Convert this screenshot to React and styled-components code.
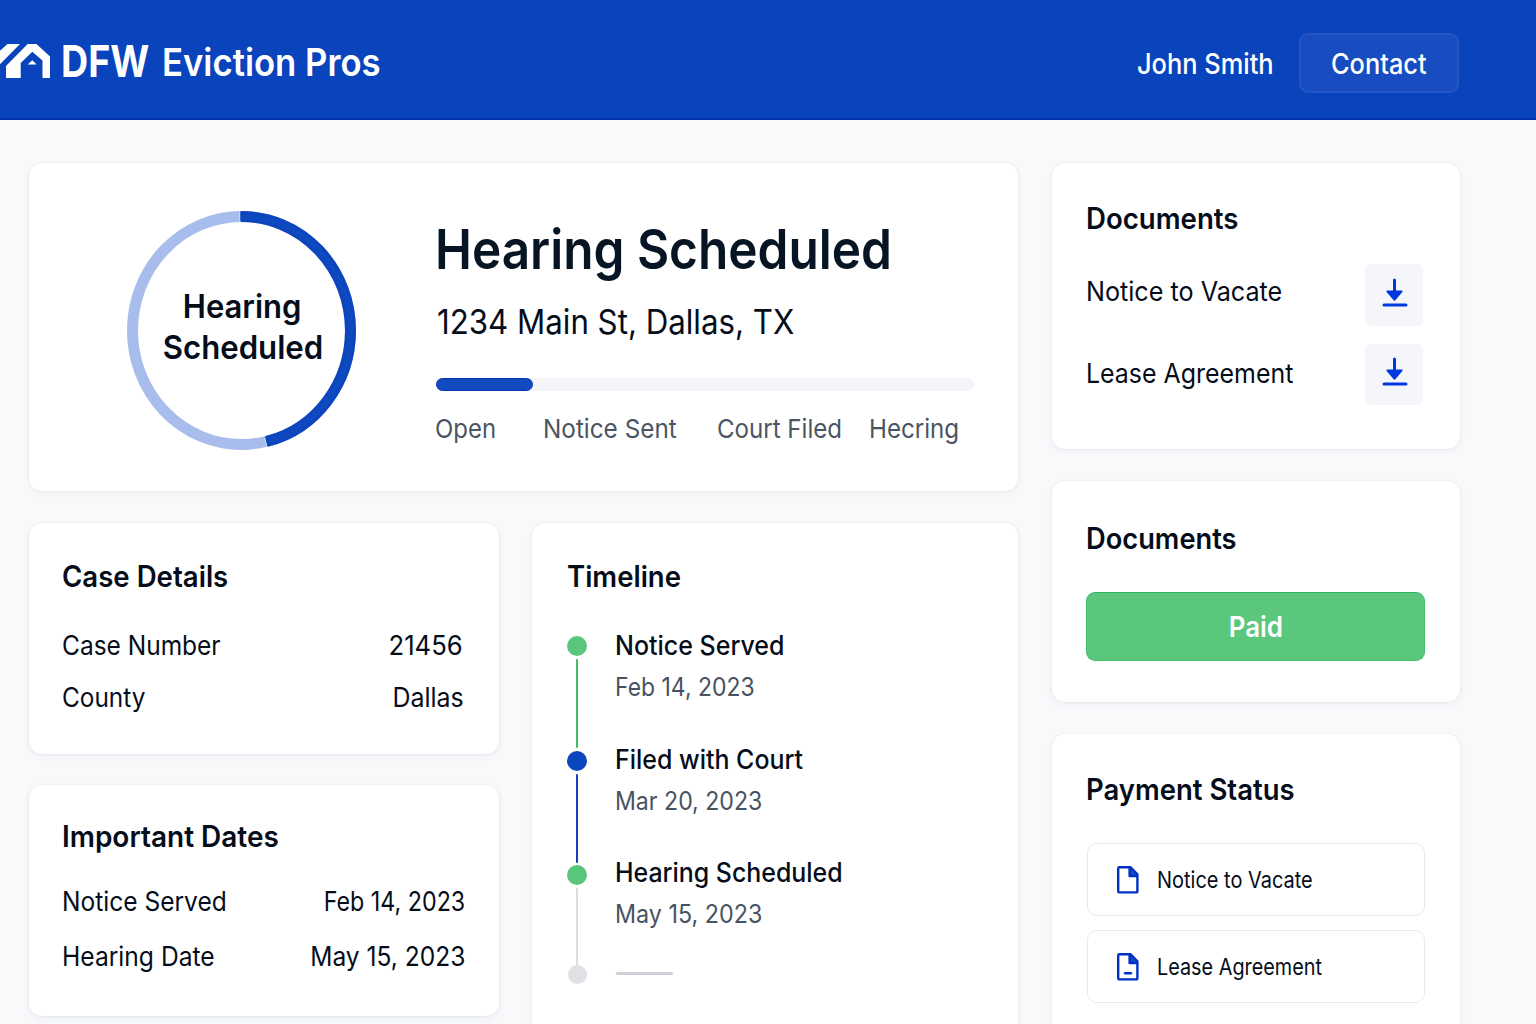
import React from "react";
import styled, { createGlobalStyle, css } from "styled-components";

const Global = createGlobalStyle`
  * { box-sizing: border-box; }
  html, body { margin: 0; height: 100%; overflow: hidden; }
  body {
    background: #f8f9fb;
    color: #060d1a;
    font-family: Inter, "Liberation Sans", sans-serif;
    -webkit-font-smoothing: antialiased;
  }
  h1, h2, p { margin: 0; font-weight: inherit; }
`;

/* Condensed setting of Inter: $fit is the horizontal scale of the glyphs. */
const condensed = css`
  display: block;
  width: max-content;
  white-space: pre;
  transform: scaleX(${(p) => p.$fit || 0.94});
  transform-origin: ${(p) => p.$from || "left"} center;
`;

const Page = styled.div`
  height: 1024px;
  overflow: hidden;
`;

const Header = styled.header`
  height: 120px;
  display: flex;
  justify-content: space-between;
  padding-right: 77px;
  color: #fff;
  background: #0a44bc;
  border-bottom: 2px solid #0032aa;
`;

const Brand = styled.div`
  display: flex;
  align-items: flex-start;
`;

const Logo = styled.svg`
  width: 52px;
  height: 36px;
  margin-top: 43px;
  fill: #fff;
`;

const BrandShort = styled.span`
  ${condensed}
  width: 99px;
  margin: 33.5px 0 0 8.7px;
  font-size: 44.5px;
  font-weight: 700;
  line-height: 55px;
`;

const BrandName = styled.span`
  ${condensed}
  margin: 37px 0 0 2.3px;
  font-size: 38px;
  font-weight: 600;
  line-height: 50px;
`;

const Account = styled.div`
  display: flex;
  align-items: flex-start;
  gap: 25px;
  padding-top: 33px;
`;

const UserName = styled.span`
  ${condensed}
  font-size: 28px;
  font-weight: 540;
  line-height: 62px;
`;

const ContactButton = styled.button`
  width: 160px;
  height: 60px;
  padding: 0;
  display: flex;
  justify-content: center;
  border: 2px solid #2456c5;
  border-radius: 9px;
  background: #174dc0;
  color: #fff;
  font: 540 28px/58px Inter, "Liberation Sans", sans-serif;
`;

const ButtonText = styled.span`
  ${condensed}
`;

const Board = styled.main`
  display: grid;
  grid-template-columns: 989px 408px;
  column-gap: 34px;
  padding: 43px 0 0 29px;
`;

const MainColumn = styled.div`
  display: flex;
  flex-direction: column;
  gap: 32px;
`;

const SideColumn = styled.div`
  display: flex;
  flex-direction: column;
  gap: 32px;
`;

const SplitRow = styled.div`
  display: grid;
  grid-template-columns: 470px 486px;
  column-gap: 33px;
  align-items: start;
`;

const CaseColumn = styled.div`
  display: flex;
  flex-direction: column;
  gap: 31px;
`;

const Card = styled.section`
  height: ${(p) => p.$height}px;
  padding: ${(p) => p.$pad || "33px 34px"};
  border-radius: 13px;
  background: #fff;
  box-shadow: 0 0 2px rgba(30, 45, 70, 0.09), 0 2px 6px rgba(30, 45, 70, 0.06);
`;

const CardTitle = styled.h2`
  ${condensed}
  font-size: 29.5px;
  font-weight: 570;
  line-height: 42px;
`;

const Hero = styled(Card)`
  display: flex;
  padding: 48px 42px 0 98px;
`;

const Ring = styled.div`
  display: grid;
  width: 229px;
  height: 239px;
  margin-right: 80px;
  > * { grid-area: 1 / 1; }
`;

const RingText = styled.div`
  display: flex;
  flex-direction: column;
  align-items: center;
  padding: 74.5px 0 0 2px;
`;

const RingLine = styled.span`
  ${condensed}
  font-size: 33px;
  font-weight: 560;
  line-height: 41px;
`;

const HeroBody = styled.div`
  flex: 1;
  padding-top: 5px;
`;

const HeroTitle = styled.h1`
  ${condensed}
  margin-left: -0.7px;
  font-size: 55px;
  font-weight: 590;
  line-height: 66px;
  color: #071424;
`;

const Address = styled.p`
  ${condensed}
  margin-top: 16px;
  margin-left: 0.6px;
  font-size: 34px;
  line-height: 48px;
`;

const Track = styled.div`
  width: 538px;
  height: 13px;
  margin: 32px 0 0;
  border-radius: 7px;
  background: #f4f5f9;
`;

const TrackFill = styled.div`
  width: 97px;
  height: 13px;
  border-radius: 7px;
  border: 1px solid #0536b8;
  background: #114abf;
`;

const Steps = styled.div`
  display: grid;
  grid-template-columns: 108px 174px 152px auto;
  margin: 18px 0 0 -1px;
`;

const Step = styled.span`
  ${condensed}
  font-size: 26px;
  line-height: 40px;
  color: #4a5563;
`;

const Rows = styled.div`
  display: flex;
  flex-direction: column;
  margin-top: ${(p) => p.$top}px;
`;

const Row = styled.div`
  display: flex;
  justify-content: space-between;
  height: ${(p) => p.$height}px;
  padding-right: ${(p) => p.$inset || 0}px;
  line-height: 40px;
  font-size: 26.5px;
`;

const RowText = styled.span`
  ${condensed}
  font-weight: ${(p) => p.$weight || 400};
`;

const TimelineBody = styled.div`
  display: flex;
  gap: 28px;
  margin-top: 39px;
`;

const Rail = styled.div`
  width: 20px;
  display: flex;
  flex-direction: column;
  align-items: center;
`;

const Dot = styled.i`
  width: ${(p) => p.$size || 20}px;
  height: ${(p) => p.$size || 20}px;
  flex: none;
  border-radius: 50%;
  background: ${(p) => p.$color};
`;

const Connector = styled.i`
  width: 2px;
  height: ${(p) => p.$height}px;
  margin: ${(p) => p.$gap};
  border-radius: 1px;
  background: ${(p) => p.$color};
`;

const Events = styled.div`
  display: flex;
  flex-direction: column;
`;

const EventItem = styled.div`
  height: 113.5px;
`;

const EventName = styled.p`
  ${condensed}
  margin-top: -11px;
  font-size: 26.5px;
  font-weight: 450;
  line-height: 40px;
`;

const EventDate = styled.p`
  ${condensed}
  margin-top: 2px;
  font-size: 25.5px;
  line-height: 40px;
  color: #485361;
`;

const Placeholder = styled.div`
  width: 57px;
  height: 3px;
  margin: -5px 0 0 1px;
  border-radius: 2px;
  background: #cfcfd7;
`;

const DocRow = styled.div`
  display: flex;
  justify-content: space-between;
  width: 339px;
  height: ${(p) => p.$height}px;
  font-size: 27px;
  line-height: ${(p) => p.$line}px;
  & + & { margin-top: 18px; }
`;

const DownloadButton = styled.button`
  width: 58px;
  height: 100%;
  margin-right: 2px;
  padding: ${(p) => p.$drop}px 0 0 2px;
  display: flex;
  justify-content: center;
  border: 0;
  border-radius: 6px;
  background: #f5f6fa;
`;

const PaidButton = styled.button`
  width: 339px;
  height: 69px;
  margin-top: 33px;
  padding: 0;
  display: flex;
  justify-content: center;
  border: 1px solid #45bd6b;
  border-top-color: #2fb45a;
  border-radius: 9px;
  background: #5bc77d;
  color: #fff;
  font: 600 28.5px/68px Inter, "Liberation Sans", sans-serif;
`;

const FileList = styled.div`
  display: flex;
  flex-direction: column;
  gap: 14px;
  width: 338px;
  margin: 33px 0 0 1px;
`;

const FileItem = styled.div`
  display: flex;
  align-items: center;
  gap: 18px;
  height: 73px;
  padding-left: 29px;
  border: 1px solid #e6eaf0;
  border-radius: 10px;
  font-size: 22.7px;
  line-height: 40px;
`;

function ProgressRing() {
  return (
    <svg width="229" height="239" viewBox="0 0 229 239">
      <ellipse cx="114.5" cy="119.5" rx="109" ry="114" fill="none" stroke="#a9bdec" strokeWidth="11" />
      <path
        d="M114.7 1.5 A113 118 0 0 1 227.5 119.5 A113 118 0 0 1 141.5 234.1 L139.7 226.3 A105 110 0 0 0 219.5 119.5 A105 110 0 0 0 114.7 9.5 Z"
        fill="#0f49bf" stroke="#0c45be" strokeWidth="3" strokeLinejoin="round"
      />
      <path d="M112.6 1 V11 M137.6 227 L139.8 236" stroke="#cbd7f4" strokeWidth="1" fill="none" />
    </svg>
  );
}

function DownloadIcon() {
  return (
    <svg width="26" height="29" viewBox="0 0 26 29">
      <path d="M12.5 2 V14 M2 27 H24" stroke="#0038df" strokeWidth="3" strokeLinecap="round" />
      <path d="M5.2 13.4 H19.8 L12.5 22 Z" fill="#0038df" stroke="#0038df" strokeWidth="1.6" strokeLinejoin="round" />
    </svg>
  );
}

function FileIcon({ dash }) {
  return (
    <svg width="22" height="28" viewBox="0 0 22 28">
      <path d="M12.5 1.5 V10 H20.5 Z" fill="#114cc4" />
      <path
        d="M2.2 1.3 H13.6 L20.4 8.4 V25 Q20.4 26.4 19 26.4 H2.6 Q1.2 26.4 1.2 25 V2.4 Q1.2 1.3 2.2 1.3 Z M12.6 1.8 V10 H20"
        fill="none" stroke="#0030c4" strokeWidth="2.4" strokeLinejoin="round"
      />
      {dash && <path d="M8 20.3 H14" stroke="#0030c4" strokeWidth="2.4" strokeLinecap="round" />}
    </svg>
  );
}

export default function App() {
  return (
    <Page>
      <Global />
      <Header>
        <Brand>
          <Logo viewBox="0 43 52 36">
            <path d="M0 50.7 L7.5 44 H20 L0 64.3 Z" />
            <path d="M6 78 V66 L27.7 44 H36.5 L50 56.5 V78 H42.5 V60.5 L32.3 51.8 L20.7 63 V78 Z" />
            <path d="M32.3 60.3 L36.6 64.6 H27.6 Z" />
          </Logo>
          <BrandShort $fit={0.845}>DFW</BrandShort>
          <BrandName $fit={0.913}>Eviction Pros</BrandName>
        </Brand>
        <Account>
          <UserName $fit={0.907} $from="right">John Smith</UserName>
          <ContactButton><ButtonText $fit={0.905} $from="center">Contact</ButtonText></ContactButton>
        </Account>
      </Header>
      <Board>
        <MainColumn>
          <Hero $height={328}>
            <Ring>
              <ProgressRing />
              <RingText>
                <RingLine $fit={0.94} $from="center">Hearing</RingLine>
                <RingLine $fit={0.944} $from="center">Scheduled</RingLine>
              </RingText>
            </Ring>
            <HeroBody>
              <HeroTitle $fit={0.9}>Hearing Scheduled</HeroTitle>
              <Address $fit={0.919}>1234 Main St, Dallas, TX</Address>
              <Track><TrackFill /></Track>
              <Steps>
                <Step $fit={0.92}>Open</Step>
                <Step $fit={0.935}>Notice Sent</Step>
                <Step $fit={0.926}>Court Filed</Step>
                <Step $fit={0.928}>Hecring</Step>
              </Steps>
            </HeroBody>
          </Hero>
          <SplitRow>
            <CaseColumn>
              <Card $height={231} $pad="32px 34px 0 33px">
                <CardTitle $fit={0.936}>Case Details</CardTitle>
                <Rows $top={28}>
                  <Row $height={52} $inset={2.5}>
                    <RowText $fit={0.924}>Case Number</RowText>
                    <RowText $fit={0.967} $weight={440} $from="right">21456</RowText>
                  </Row>
                  <Row $height={52} $inset={1}>
                    <RowText $fit={0.92}>County</RowText>
                    <RowText $fit={0.94} $from="right">Dallas</RowText>
                  </Row>
                </Rows>
              </Card>
              <Card $height={231} $pad="30px 34px 0 33px">
                <CardTitle $fit={0.948}>Important Dates</CardTitle>
                <Rows $top={24}>
                  <Row $height={54.5}>
                    <RowText $fit={0.926}>Notice Served</RowText>
                    <RowText $fit={0.878} $from="right">Feb 14, 2023</RowText>
                  </Row>
                  <Row $height={54}>
                    <RowText $fit={0.929}>Hearing Date</RowText>
                    <RowText $fit={0.927} $from="right">May 15, 2023</RowText>
                  </Row>
                </Rows>
              </Card>
            </CaseColumn>
            <Card $height={540} $pad="32px 35px">
              <CardTitle $fit={0.933}>Timeline</CardTitle>
              <TimelineBody>
                <Rail>
                  <Dot $color="#5ac67c" />
                  <Connector $height={89} $gap="3px 0 2.5px" $color="#45ba68" />
                  <Dot $color="#0c46bf" />
                  <Connector $height={89} $gap="3px 0 2.5px" $color="#1440b8" />
                  <Dot $color="#5ac67c" />
                  <Connector $height={77} $gap="3px 0 0" $color="#dcdce1" />
                  <Dot $size={19} $color="#e0e0e5" />
                </Rail>
                <Events>
                  <EventItem>
                    <EventName $fit={0.943}>Notice Served</EventName>
                    <EventDate $fit={0.9}>Feb 14, 2023</EventDate>
                  </EventItem>
                  <EventItem>
                    <EventName $fit={0.941}>Filed with Court</EventName>
                    <EventDate $fit={0.906}>Mar 20, 2023</EventDate>
                  </EventItem>
                  <EventItem>
                    <EventName $fit={0.94}>Hearing Scheduled</EventName>
                    <EventDate $fit={0.914}>May 15, 2023</EventDate>
                  </EventItem>
                  <Placeholder />
                </Events>
              </TimelineBody>
            </Card>
          </SplitRow>
        </MainColumn>
        <SideColumn>
          <Card $height={286} $pad="34px 34px">
            <CardTitle $fit={0.936}>Documents</CardTitle>
            <Rows $top={25}>
              <DocRow $height={62} $line={55}>
                <RowText $fit={0.932}>Notice to Vacate</RowText>
                <DownloadButton $drop={13.5}><DownloadIcon /></DownloadButton>
              </DocRow>
              <DocRow $height={61} $line={60}>
                <RowText $fit={0.923}>Lease Agreement</RowText>
                <DownloadButton $drop={13}><DownloadIcon /></DownloadButton>
              </DocRow>
            </Rows>
          </Card>
          <Card $height={221} $pad="36px 34px">
            <CardTitle $fit={0.924}>Documents</CardTitle>
            <PaidButton><ButtonText $fit={0.91} $from="center">Paid</ButtonText></PaidButton>
          </Card>
          <Card $height={330} $pad="34px 34px">
            <CardTitle $fit={0.932}>Payment Status</CardTitle>
            <FileList>
              <FileItem>
                <FileIcon />
                <RowText $fit={0.88}>Notice to Vacate</RowText>
              </FileItem>
              <FileItem>
                <FileIcon dash />
                <RowText $fit={0.874}>Lease Agreement</RowText>
              </FileItem>
            </FileList>
          </Card>
        </SideColumn>
      </Board>
    </Page>
  );
}
